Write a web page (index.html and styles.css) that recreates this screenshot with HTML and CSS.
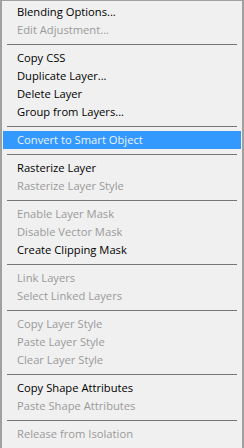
FILE: index.html
```html
<!DOCTYPE html>
<html>
    <head>
        <title>Layer menu</title>
        <link rel="stylesheet" href="styles.css">
    </head>
    <body>
        <div class="menu">
            <div class="item">Blending Options...</div>
            <div class="item off">Edit Adjustment...</div>
            <div class="sep"></div>
            <div class="item">Copy CSS</div>
            <div class="item">Duplicate Layer...</div>
            <div class="item">Delete Layer</div>
            <div class="item">Group from Layers...</div>
            <div class="sep"></div>
            <div class="item active">Convert to Smart Object</div>
            <div class="sep"></div>
            <div class="item">Rasterize Layer</div>
            <div class="item off">Rasterize Layer Style</div>
            <div class="sep"></div>
            <div class="item off">Enable Layer Mask</div>
            <div class="item off">Disable Vector Mask</div>
            <div class="item">Create Clipping Mask</div>
            <div class="sep"></div>
            <div class="item off">Link Layers</div>
            <div class="item off">Select Linked Layers</div>
            <div class="sep"></div>
            <div class="item off">Copy Layer Style</div>
            <div class="item off">Paste Layer Style</div>
            <div class="item off">Clear Layer Style</div>
            <div class="sep"></div>
            <div class="item">Copy Shape Attributes</div>
            <div class="item off">Paste Shape Attributes</div>
            <div class="sep"></div>
            <div class="item off">Release from Isolation</div>
        </div>
    </body>
</html>
```

FILE: styles.css
```css
html, body{
    margin: 0;
    padding: 0;
}
body{
    width: 244px;
    height: 448px;
    background-color: #f0f0f0;
}
.menu{
    box-sizing: border-box;
    width: 244px;
    height: 448px;
    background-color: #f0f0f0;
    border-top: 1px solid #a0a0a0;
    border-left: 2px solid #a0a0a0;
    border-right: 2px solid #a0a0a0;
    padding: 2px 1px 0 1px;
    font-family: "Open Sans", "Noto Sans", sans-serif;
    font-size: 11.2px;
    color: #000;
}
.item{
    height: 18px;
    line-height: 18px;
    padding-left: 14px;
    white-space: nowrap;
}
.off{
    color: #9a9a9a;
}
.active{
    background-color: #3399ff;
    color: #eaf4ff;
}
.sep{
    height: 1px;
    margin: 5px 4px 4px 4px;
    background-color: #767676;
}
```
